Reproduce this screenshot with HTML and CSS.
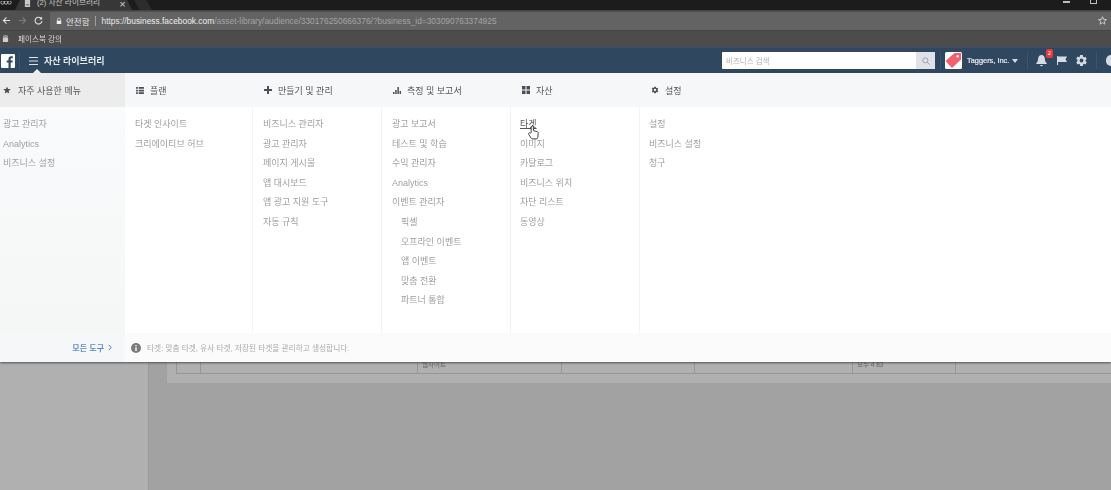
FILE: index.html
```html
<!DOCTYPE html>
<html lang="ko">
<head>
<meta charset="utf-8">
<title>자산 라이브러리</title>
<link rel="stylesheet" href="styles.css">
</head>
<body>
<div class="page">
  <div class="tabstrip">
    <svg class="tabstrip-app" viewBox="0 0 12 6" width="12" height="6"><circle cx="2.5" cy="1.5" r="1.7"/><circle cx="6" cy="1.5" r="1.7"/><circle cx="9.5" cy="1.5" r="1.7"/></svg>
    <div class="tab">
      <svg class="tab-icon" viewBox="0 0 8 8" width="7" height="7"><path d="M1 0h6v8H1z" fill="#c9c9c9"/><path d="M2 5h4v1H2z" fill="#555"/></svg>
      <span class="tab-title">(2) 자산 라이브러리</span>
      <span class="tab-close">×</span>
    </div>
    <div class="tab-new"></div>
    <div class="window-controls"><span class="wc-min"></span><span class="wc-max"></span></div>
  </div>
  <div class="toolbar">
    <svg class="nav-icon" viewBox="0 0 10 10" width="9" height="9"><path d="M9 5H2M5 1.500 1.500 5 5 8.500" fill="none" stroke="#e2e2e2" stroke-width="1.200"/></svg>
    <svg class="nav-icon" viewBox="0 0 10 10" width="9" height="9"><path d="M1 5h7M5 1.500 8.500 5 5 8.500" fill="none" stroke="#7c7c7c" stroke-width="1.200"/></svg>
    <svg class="nav-icon" viewBox="0 0 10 10" width="9" height="9"><path d="M8.300 3.200A3.800 3.800 0 1 0 8.800 5.500" fill="none" stroke="#e2e2e2" stroke-width="1.200"/><path d="M9 .8v3.200H5.800z" fill="#e2e2e2"/></svg>
    <div class="omnibox">
      <svg class="lock" viewBox="0 0 8 9" width="6" height="8"><path d="M2 4V2.600a2 2 0 0 1 4 0V4" fill="none" stroke="#eee" stroke-width="1"/><path d="M1 4h6v4.500H1z" fill="#eee"/></svg>
      <span class="secure">안전함</span>
      <span class="omni-sep"></span>
      <span class="url"><span class="url-scheme">https://</span><span class="url-host">business.facebook.com</span>/asset-library/audience/330176250666376/?business_id=303090763374925</span>
      <svg class="bookmark-star" viewBox="0 0 10 10" width="9" height="9"><path d="M5 .8 6.200 3.800 9.400 4 6.900 6 7.700 9.100 5 7.400 2.300 9.100 3.100 6 .6 4 3.800 3.800z" fill="none" stroke="#dedede" stroke-width=".9"/></svg>
    </div>
  </div>
  <div class="bookmarks">
    <svg class="bm-icon" viewBox="0 0 8 8" width="7" height="7"><path d="M1 3.500h6V8H1z" fill="#cfcfcf"/><path d="M2 1h4v2H2z" fill="none" stroke="#cfcfcf"/></svg>
    <span class="bm-label">페이스북 강의</span>
  </div>
  <header class="fb-header">
    <svg class="fb-logo" viewBox="0 0 14 14" width="14" height="14"><rect width="14" height="14" rx="1" fill="#fff"/><path d="M9.700 14V8.600h1.800l.3-2.100H9.700V5.200c0-.6.2-1 1-1h1.100V2.300c-.2 0-.9-.1-1.600-.1-1.600 0-2.700 1-2.700 2.800v1.500H5.700v2.100h1.800V14z" fill="#2f4860"/></svg>
    <span class="fb-sep"></span>
    <svg class="hamburger" viewBox="0 0 9 8" width="9" height="8"><path d="M0 .5h9M0 4h9M0 7.500h9" stroke="#dfe3e8" stroke-width="1"/></svg>
    <span class="app-title">자산 라이브러리</span>
    <span class="menu-caret"></span>
    <div class="header-right">
      <div class="search">
        <span class="search-text">비즈니스 검색</span>
        <span class="search-btn"><svg viewBox="0 0 10 10" width="8" height="8"><circle cx="4.200" cy="4.200" r="3.200" fill="none" stroke="#8d949e" stroke-width="1"/><path d="M6.600 6.600 9.500 9.500" stroke="#8d949e" stroke-width="1"/></svg></span>
      </div>
      <span class="hdr-sep"></span>
      <div class="biz-logo"><svg viewBox="0 0 17 17" width="17" height="17"><rect width="17" height="17" rx="1.500" fill="#fff"/><path d="M.5 9 9.500 1H16v6.500L7 16z" fill="#f0626f"/><circle cx="12.700" cy="4.300" r="1.200" fill="#fff"/></svg></div>
      <span class="biz-name">Taggers, Inc.</span>
      <span class="biz-caret"></span>
      <span class="hdr-sep second"></span>
      <div class="bell">
        <svg viewBox="0 0 12 13" width="11" height="13"><path d="M6 .5c-2.500 0-3.700 2-3.700 4.300 0 2.400-1 3.600-2 4.500v1h11.400v-1c-1-.9-2-2.100-2-4.500C9.700 2.500 8.500.5 6 .5zM4.500 11.300a1.500 1.500 0 0 0 3 0z" fill="#d5dbe2"/></svg>
        <span class="badge">2</span>
      </div>
      <svg class="flag" viewBox="0 0 10 9" width="10" height="9"><path d="M0 0h1v9H0zM1 .5h9l-1.500 2.800L10 6H1z" fill="#d5dbe2"/></svg>
      <svg class="gear-hdr" viewBox="0 0 24 24" width="13" height="13"><path d="M19.400 13c.1-.3.100-.7.100-1s0-.7-.1-1l2.300-1.800-2.300-4-2.700 1.100c-.5-.4-1.100-.8-1.800-1L14.500 2h-5l-.4 2.800c-.6.300-1.200.6-1.800 1L4.600 4.700l-2.300 4L4.600 10.500c-.1.400-.1.800-.1 1.500s0 1 .1 1.500l-2.300 1.800 2.300 4 2.700-1.100c.5.400 1.100.8 1.800 1l.4 2.800h5l.4-2.800c.6-.3 1.200-.6 1.800-1l2.700 1.100 2.300-4zM12 15.500a3.500 3.500 0 1 1 0-7 3.500 3.500 0 0 1 0 7z" fill="#d5dbe2"/></svg>
      <span class="hdr-sep third"></span>
      <span class="help-edge"></span>
    </div>
  </header>
  <nav class="menu">
    <div class="menu-body">
      <section class="col col-fav">
        <h3 class="col-head"><svg viewBox="0 0 10 10" width="8" height="8"><path d="M5 .5 6.300 3.700 9.700 3.900 7.100 6.100 7.900 9.500 5 7.700 2.100 9.500 2.900 6.100.3 3.900 3.700 3.700z" fill="#4b4f56"/></svg><span>자주 사용한 메뉴</span></h3>
        <ul class="items">
          <li>광고 관리자</li>
          <li>Analytics</li>
          <li>비즈니스 설정</li>
        </ul>
      </section>
      <section class="col col-plan">
        <h3 class="col-head"><svg viewBox="0 0 9 8" width="8" height="7"><path d="M0 0h2v2H0zM3 0h6v2H3zM0 3h2v2H0zM3 3h6v2H3zM0 6h2v2H0zM3 6h6v2H3z" fill="#4b4f56"/></svg><span>플랜</span></h3>
        <ul class="items">
          <li>타겟 인사이트</li>
          <li>크리에이티브 허브</li>
        </ul>
      </section>
      <section class="col col-create">
        <h3 class="col-head"><svg viewBox="0 0 8 8" width="8" height="8"><path d="M3 0h2v3h3v2H5v3H3V5H0V3h3z" fill="#4b4f56"/></svg><span>만들기 및 관리</span></h3>
        <ul class="items">
          <li>비즈니스 관리자</li>
          <li>광고 관리자</li>
          <li>페이지 게시물</li>
          <li>앱 대시보드</li>
          <li>앱 광고 지원 도구</li>
          <li>자동 규칙</li>
        </ul>
      </section>
      <section class="col col-measure">
        <h3 class="col-head"><svg viewBox="0 0 8 8" width="8" height="8"><path d="M0 6h1.500v2H0zM2.200 4h1.500v4H2.200zM4.400 1h1.500v7H4.400zM6.600 5H8v3H6.600z" fill="#4b4f56"/></svg><span>측정 및 보고서</span></h3>
        <ul class="items">
          <li>광고 보고서</li>
          <li>테스트 및 학습</li>
          <li>수익 관리자</li>
          <li>Analytics</li>
          <li>이벤트 관리자</li>
          <li class="sub">픽셀</li>
          <li class="sub">오프라인 이벤트</li>
          <li class="sub">앱 이벤트</li>
          <li class="sub">맞춤 전환</li>
          <li class="sub">파트너 통합</li>
        </ul>
      </section>
      <section class="col col-assets">
        <h3 class="col-head"><svg viewBox="0 0 8 8" width="8" height="8"><path d="M0 0h3.500v3.500H0zM4.500 0H8v3.500H4.500zM0 4.500h3.500V8H0zM4.500 4.500H8V8H4.500z" fill="#4b4f56"/></svg><span>자산</span></h3>
        <ul class="items">
          <li class="active">타겟</li>
          <li>이미지</li>
          <li>카탈로그</li>
          <li>비즈니스 위치</li>
          <li>차단 리스트</li>
          <li>동영상</li>
        </ul>
      </section>
      <section class="col col-settings">
        <h3 class="col-head"><svg viewBox="0 0 24 24" width="8" height="8"><path d="M19.400 13c.1-.3.100-.7.100-1s0-.7-.1-1l2.300-1.800-2.300-4-2.700 1.100c-.5-.4-1.100-.8-1.800-1L14.500 2h-5l-.4 2.800c-.6.300-1.200.6-1.800 1L4.600 4.700l-2.300 4L4.600 10.500c-.1.400-.1.800-.1 1.500s0 1 .1 1.500l-2.300 1.800 2.300 4 2.700-1.100c.5.400 1.100.8 1.800 1l.4 2.800h5l.4-2.800c.6-.3 1.200-.6 1.800-1l2.700 1.100 2.300-4zM12 15.500a3.500 3.500 0 1 1 0-7 3.500 3.500 0 0 1 0 7z" fill="#4b4f56"/></svg><span>설정</span></h3>
        <ul class="items">
          <li>설정</li>
          <li>비즈니스 설정</li>
          <li>청구</li>
        </ul>
      </section>
    </div>
    <div class="menu-foot">
      <div class="foot-left"><span class="all-tools">모든 도구</span><svg viewBox="0 0 5 8" width="4" height="7"><path d="M1 .7 4 4 1 7.300" fill="none" stroke="#4a7ab5" stroke-width="1.200"/></svg></div>
      <div class="foot-right"><svg viewBox="0 0 10 10" width="10" height="10"><circle cx="5" cy="5" r="5" fill="#7b7b7b"/><path d="M4.300 2h1.400v1.200H4.300zM4.300 4.200h1.400V8H4.300z" fill="#fff"/></svg><span class="foot-hint">타겟: 맞춤 타겟, 유사 타겟, 저장된 타겟을 관리하고 생성합니다.</span></div>
    </div>
    <svg class="cursor" viewBox="0 0 12 16" width="11" height="15"><path d="M3.500 8V2a1.200 1.200 0 0 1 2.400 0v4l4 1c1 .3 1.400 1 1.300 2l-.6 4.500c-.1.800-.6 1.500-1.600 1.500H5c-.7 0-1.200-.3-1.600-.9L.8 10c-.7-1.200.7-2.400 1.700-1.400z" fill="#fff" stroke="#333" stroke-width="1"/></svg>
  </nav>
  <div class="backdrop">
    <aside class="rail"></aside>
    <main class="content">
      <div class="card">
        <div class="table">
          <span class="cell cell-a"></span>
          <span class="cell cell-b"></span>
          <span class="cell cell-c"><span class="cell-text">웹사이트</span></span>
          <span class="cell cell-d"></span>
          <span class="cell cell-e"></span>
          <span class="cell cell-f"><span class="cell-text">모두 4 83</span></span>
          <span class="cell cell-g"></span>
        </div>
      </div>
    </main>
  </div>
</div>
</body>
</html>
```
FILE: styles.css
```css
* { box-sizing: border-box; }
html, body { margin: 0; padding: 0; }
body { font-family: "Liberation Sans", "Noto Sans CJK KR", sans-serif; background: #a2a2a2; }
ul, h3 { margin: 0; padding: 0; list-style: none; }
.page { width: 1111px; height: 490px; overflow: hidden; display: flex; flex-direction: column; position: relative; filter: blur(.5px); }

.tabstrip { height: 10px; flex: none; background: #1c1c1c; display: flex; align-items: flex-end; position: relative; }
.tabstrip-app { flex: none; fill: none; stroke: #cfcfcf; stroke-width: .8; margin: 0 1px 3px 0; }
.tab { width: 117px; height: 10px; flex: none; background: #373737; margin-left: 2px; display: flex; align-items: flex-start; padding-left: 9px; clip-path: polygon(5px 0, calc(100% - 5px) 0, 100% 100%, 0 100%); overflow: hidden; }
.tab-icon { flex: none; margin-right: 6px; }
.tab-title { flex: none; color: #c8c8c8; font-size: 7.700px; line-height: 6px; white-space: nowrap; }
.tab-close { flex: none; color: #d0d0d0; font-size: 11px; line-height: 8px; margin-left: 19px; }
.tab-new { width: 18px; height: 10px; flex: none; background: #2c2c2c; margin-left: 2px; clip-path: polygon(0 0, 70% 0, 100% 100%, 30% 100%); }
.window-controls { margin-left: auto; display: flex; gap: 20px; padding-right: 14px; align-items: flex-start; height: 10px; }
.wc-min { width: 7px; height: 2px; background: #bdbdbd; margin-top: 1px; }
.wc-max { width: 7px; height: 4px; border: 1px solid #bdbdbd; border-top: 0; }

.toolbar { height: 20px; flex: none; background: #505050; border-top: 1px solid #444; display: flex; align-items: center; padding-left: 2px; gap: 7px; }
.nav-icon { flex: none; }
.omnibox { flex: 1; height: 18px; background: #636363; display: flex; align-items: center; padding: 0 4px 0 6px; }
.lock { margin-right: 4px; }
.secure { color: #e6e6e6; font-size: 8.500px; }
.omni-sep { width: 1px; height: 10px; background: #a0a0a0; margin: 0 5px 0 6px; }
.url { color: #a3a3a3; font-size: 8.400px; white-space: nowrap; flex: 1; }
.url-scheme { color: #e6e6e6; }
.url-host { color: #f0f0f0; }
.bookmark-star { flex: none; }

.bookmarks { height: 17px; flex: none; background: #4c4c4c; border-top: 1px solid #444; display: flex; align-items: center; padding: 0 0 2px 2px; }
.bm-label { color: #d8d8d8; font-size: 7.600px; margin-left: 9px; }

.fb-header { height: 26px; flex: none; background: #2f4860; display: flex; align-items: center; position: relative; padding-left: 1px; border-top: 1px solid #35516c; }
.fb-sep { width: 1px; height: 16px; background: #3b5570; margin: 0 9px 0 4px; }
.hamburger { margin-right: 6px; }
.app-title { color: #e6eaee; font-size: 9px; font-weight: 700; }
.menu-caret { position: absolute; left: 33px; bottom: 0; border: 4px solid transparent; border-bottom-color: #f5f6f8; border-top: 0; }
.header-right { margin-left: auto; display: flex; align-items: center; }
.search { width: 213px; height: 17px; background: #fff; border-radius: 1px; display: flex; align-items: center; justify-content: space-between; padding-left: 4px; }
.search-text { color: #b4b4b4; font-size: 7.500px; }
.search-btn { width: 19px; height: 17px; background: #dfe3e8; display: flex; align-items: center; justify-content: center; }
.hdr-sep { width: 1px; height: 17px; background: #3b5570; margin: 0 4px 0 5px; }
.biz-logo { width: 17px; height: 17px; display: flex; }
.biz-name { color: #e9edf1; width: 41px; font-size: 7.400px; margin-left: 5px; white-space: nowrap; -webkit-text-stroke: .2px #e9edf1; }
.biz-caret { border: 3px solid transparent; border-top: 4px solid #d5dbe2; border-bottom: 0; margin-left: 4px; }
.hdr-sep.second { margin: 0 8px 0 9px; }
.bell { position: relative; display: flex; margin-right: 10px; }
.badge { position: absolute; left: 10px; top: -5px; width: 7px; height: 9px; background: #e9383a; border-radius: 2px; color: #fff; font-size: 6px; line-height: 9px; text-align: center; }
.flag { margin-right: 8px; }
.hdr-sep.third { margin: 0 9px 0 8px; }
.help-edge { width: 5px; height: 11px; background: #d5dbe2; border-radius: 6px 0 0 6px; }

.menu { height: 289px; flex: none; background: #fff; display: flex; flex-direction: column; position: relative; z-index: 2; box-shadow: 0 1px 2px rgba(60,60,60,.8); }
.menu-body { flex: 1; display: flex; background: #fff; }
.col { width: 129px; flex: none; display: flex; flex-direction: column; }
.col-fav { width: 125px; background: linear-gradient(#fafbfc, #f5f6f6); }
.col-plan { width: 127px; }
.col-settings { flex: 1; }
.col-head { height: 34px; flex: none; background: #f6f7f9; display: flex; align-items: center; gap: 6px; padding: 0 0 0 12px; font-size: 9px; font-weight: 400; color: #555; white-space: nowrap; }
.col-plan .col-head { padding-left: 11px; }
.col-fav .col-head { padding-left: 3px; gap: 7px; background: #ececed; }
.items { flex: 1; padding-top: 8px; border-left: 1px solid #f3f3f4; }
.col-fav .items, .col-plan .items { border-left: 0; }
.items li { height: 19.600px; line-height: 19.600px; font-size: 9px; color: #a0a0a0; padding-left: 10px; white-space: nowrap; }
.col-fav .items li { padding-left: 3px; }
.col-assets .items li, .col-settings .items li { padding-left: 9px; }
.items li.sub { padding-left: 19px; }
.items li.active { color: #555; text-decoration: underline; }
.menu-foot { height: 29px; flex: none; display: flex; background: #fbfbfb; }
.foot-left { width: 125px; flex: none; display: flex; align-items: center; justify-content: flex-end; gap: 4px; padding-right: 13px; background: #f6f7f8; }
.all-tools { color: #5d8fcb; font-size: 8px; font-weight: 700; }
.foot-right { flex: 1; display: flex; align-items: center; gap: 6px; padding-left: 6px; }
.foot-hint { color: #ababab; font-size: 7.700px; white-space: nowrap; }
.cursor { position: absolute; left: 528px; top: 52px; }

.backdrop { flex: 1; display: flex; }
.rail { width: 149px; flex: none; background: #b0b0b0; border-right: 1px solid #9a9a9a; }
.content { flex: 1; background: #a2a2a2; padding-left: 17px; }
.card { height: 22px; background: #b0b0b0; border: 1px solid #a0a0a0; border-top: 0; border-right: 0; border-radius: 0 0 0 2px; padding: 0 0 10px 9px; }
.table { height: 12px; display: grid; grid-template-columns: 24px 217px 144px 133px 158px 103px 1fr; border: 1px solid #969696; border-top: 0; border-right: 0; }
.cell { border-right: 1px solid #969696; display: block; }
.cell-g { border-right: 0; }
.cell-text { color: #666; font-size: 6.500px; line-height: 6px; display: block; padding-left: 4px; }
```
